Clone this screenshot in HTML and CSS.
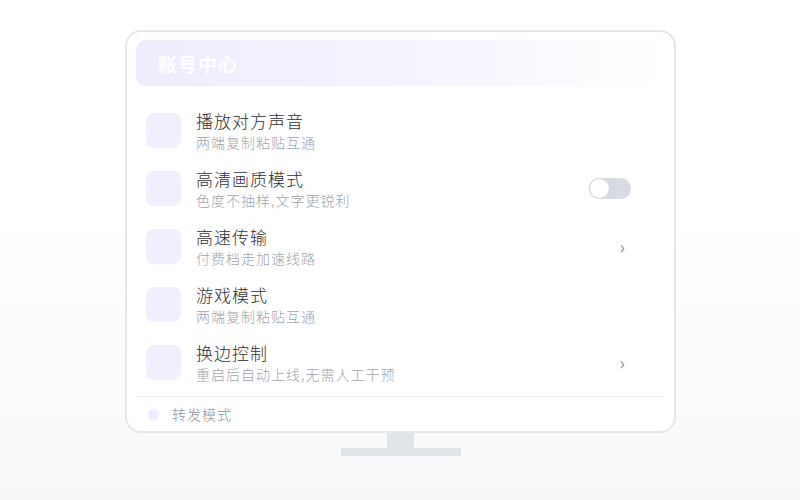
FILE: index.html
```html
<!DOCTYPE html>
<html lang="zh">
<head>
<meta charset="utf-8">
<link rel="stylesheet" href="styles.css">
</head>
<body>
<div class="stage">
  <div class="monitor">
    <div class="screen">
      <div class="header"><span class="header-title">账号中心</span></div>
      <div class="list">
        <div class="row">
          <div class="icon"></div>
          <div class="text"><div class="title">播放对方声音</div><div class="sub">两端复制粘贴互通</div></div>
        </div>
        <div class="row">
          <div class="icon"></div>
          <div class="text"><div class="title">高清画质模式</div><div class="sub">色度不抽样,文字更锐利</div></div>
          <div class="toggle"><div class="knob"></div></div>
        </div>
        <div class="row">
          <div class="icon"></div>
          <div class="text"><div class="title">高速传输</div><div class="sub">付费档走加速线路</div></div>
          <div class="chev">›</div>
        </div>
        <div class="row">
          <div class="icon"></div>
          <div class="text"><div class="title">游戏模式</div><div class="sub">两端复制粘贴互通</div></div>
        </div>
        <div class="row">
          <div class="icon"></div>
          <div class="text"><div class="title">换边控制</div><div class="sub">重启后自动上线,无需人工干预</div></div>
          <div class="chev">›</div>
        </div>
      </div>
      <div class="footer"><span class="dot"></span><span class="footer-text">转发模式</span></div>
    </div>
    <div class="neck"></div>
    <div class="base"></div>
  </div>
</div>
</body>
</html>
```
FILE: styles.css
```css
html, body {
  margin: 0;
  padding: 0;
}
body {
  width: 800px;
  height: 500px;
  background: linear-gradient(to bottom, #ffffff 0, #ffffff 42%, #f8f8fa 100%);
  font-family: "Noto Sans CJK SC", "Noto Sans", sans-serif;
  overflow: hidden;
}
.stage {
  display: flex;
  justify-content: center;
  padding-top: 30px;
}
.monitor {
  display: flex;
  flex-direction: column;
  align-items: center;
  margin-left: 1px;
}
.screen {
  width: 529px;
  height: 391px;
  border: 2px solid #e3e6ea;
  border-radius: 16px;
  background: #ffffff;
  padding: 8px 9px 0 9px;
  display: flex;
  flex-direction: column;
}
.header {
  height: 46px;
  border-radius: 10px;
  background: linear-gradient(to right, #efebfd 0%, #f6f4fe 55%, #ffffff 100%);
  display: flex;
  align-items: center;
  padding-left: 22px;
}
.header-title {
  color: #ffffff;
  font-size: 19px;
  font-weight: 700;
  letter-spacing: 1px;
}
.list {
  margin-top: 15px;
  display: flex;
  flex-direction: column;
}
.row {
  height: 58px;
  display: flex;
  align-items: center;
  padding: 0 34px 0 10px;
}
.icon {
  width: 35px;
  height: 35px;
  border-radius: 8px;
  background: #f1eefd;
  flex: none;
}
.text {
  margin-left: 15px;
  flex: 1;
  display: flex;
  flex-direction: column;
  padding-top: 1px;
}
.title {
  font-size: 17px;
  line-height: 21px;
  font-weight: 300;
  letter-spacing: 1px;
  color: #2e2e30;
}
.sub {
  font-size: 14px;
  line-height: 18px;
  font-weight: 300;
  letter-spacing: 1px;
  color: #a0a4ab;
  margin-top: 2px;
}
.toggle {
  width: 42px;
  height: 21px;
  border-radius: 11px;
  background: #d8dbe1;
  position: relative;
  flex: none;
}
.knob {
  position: absolute;
  left: 1px;
  top: 1px;
  width: 19px;
  height: 19px;
  border-radius: 50%;
  background: #ffffff;
  box-shadow: 0 0 0 1px #d0d3da;
}
.chev {
  font-size: 18px;
  color: #8b909a;
  margin-right: 6px;
  line-height: 20px;
}
.footer {
  margin-top: 5px;
  border-top: 1px solid #eeeff2;
  flex: 1;
  display: flex;
  align-items: center;
  padding-left: 10px;
  margin-left: 2px;
  margin-right: 2px;
}
.dot {
  width: 11px;
  height: 11px;
  border-radius: 50%;
  background: #efedfd;
}
.footer-text {
  margin-left: 13px;
  font-size: 14px;
  font-weight: 300;
  letter-spacing: 1px;
  color: #8c9098;
}
.neck {
  width: 27px;
  height: 15px;
  background: #e0e3e7;
}
.base {
  width: 120px;
  height: 8px;
  background: #e0e3e7;
}
```
